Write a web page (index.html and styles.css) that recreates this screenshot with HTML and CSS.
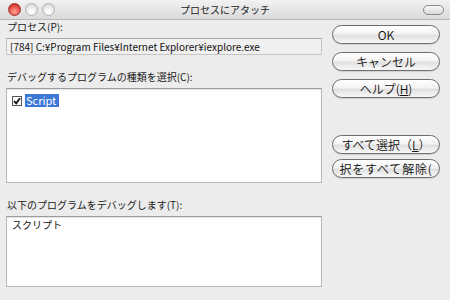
FILE: index.html
```html
<!DOCTYPE html>
<html lang="ja">
<head>
  <meta charset="UTF-8" />
  <title>プロセスにアタッチ</title>
  <link rel="stylesheet" href="styles.css">
</head>
<body>
  <div class="window">
    <div class="titlebar">
      <div class="lights">
        <span class="light red"></span>
        <span class="light"></span>
        <span class="light"></span>
      </div>
      <div class="title">プロセスにアタッチ</div>
      <span class="toolbar-pill"></span>
    </div>

    <div class="content">
      <div class="left">
        <div class="label">プロセス(P):</div>
        <div class="field">[784] C:¥Program Files¥Internet Explorer¥iexplore.exe</div>

        <div class="label gap">デバッグするプログラムの種類を選択(C):</div>
        <div class="box list">
          <div class="row">
            <span class="check">
              <svg width="8" height="8" viewBox="0 0 8 8"><path d="M1 4.2 L3.2 6.4 L7 1.2" fill="none" stroke="#111" stroke-width="1.8"/></svg>
            </span>
            <span class="selected">Script</span>
          </div>
        </div>

        <div class="label gap">以下のプログラムをデバッグします(T):</div>
        <div class="box notes">スクリプト</div>
      </div>

      <div class="right">
        <button class="btn first">OK</button>
        <button class="btn">キャンセル</button>
        <button class="btn">ヘルプ(<u>H</u>)</button>
        <button class="btn group">すべて選択（<u>L</u>）</button>
        <button class="btn tight">択をすべて解除(</button>
      </div>
    </div>
  </div>
</body>
</html>
```

FILE: styles.css
```css
body {
  margin: 0;
  font-family: "Noto Sans CJK JP", "Liberation Sans", sans-serif;
  color: #111;
}

.window {
  width: 450px;
  height: 300px;
  background: #ececec;
  overflow: hidden;
}

.titlebar {
  height: 19px;
  display: flex;
  align-items: center;
  position: relative;
  background: linear-gradient(#f2f2f2, #dadada);
  border-bottom: 1px solid #b8b8b8;
}

.lights {
  display: flex;
  gap: 4px;
  padding-left: 8px;
}

.light {
  width: 13px;
  height: 13px;
  border-radius: 50%;
  box-sizing: border-box;
  border: 1px solid #b0b0b0;
  background: radial-gradient(circle at 50% 70%, #ffffff 10%, #d6d6d6 90%);
}

.light.red {
  border-color: #a0302b;
  background: radial-gradient(circle at 50% 70%, #ff9a90 5%, #d8382e 75%);
}

.title {
  position: absolute;
  left: 0;
  right: 0;
  text-align: center;
  font-size: 10px;
  line-height: 19px;
  color: #222;
}

.toolbar-pill {
  margin-left: auto;
  margin-right: 6px;
  width: 19px;
  height: 8px;
  border-radius: 5px;
  border: 1px solid #8a8a8a;
  background: linear-gradient(#fafafa, #d8d8d8);
}

.content {
  display: flex;
  padding-left: 6px;
}

.left {
  width: 316px;
  display: flex;
  flex-direction: column;
}

.label {
  font-size: 10px;
  line-height: 12px;
  margin-top: 1px;
  padding-left: 1px;
  color: #1a1a1a;
}

.label.gap {
  margin-top: 16px;
}

.field {
  margin-top: 5px;
  height: 17px;
  box-sizing: border-box;
  border: 1px solid #c4c4c4;
  border-top-color: #a8a8a8;
  background: #f0f0f0;
  font-size: 10px;
  line-height: 15px;
  padding-left: 3px;
  white-space: nowrap;
  overflow: hidden;
}

.box {
  margin-top: 5px;
  box-sizing: border-box;
  background: #fff;
  border: 1px solid #b8b8b8;
  border-top-color: #9c9c9c;
  box-shadow: inset 0 1px 1px rgba(0,0,0,0.12);
}

.list {
  height: 95px;
  padding: 5px 0 0 5px;
}

.row {
  display: flex;
  align-items: center;
  gap: 3px;
  height: 13px;
}

.check {
  width: 8px;
  height: 8px;
  border: 1px solid #555;
  background: #fff;
  display: flex;
}

.selected {
  background: #3d78d8;
  color: #fff;
  font-size: 11px;
  line-height: 13px;
  padding: 0 3px 0 1px;
}

.notes {
  height: 71px;
  font-size: 10px;
  line-height: 12px;
  padding: 2px 0 0 5px;
}

.right {
  width: 108px;
  margin-left: 10px;
  display: flex;
  flex-direction: column;
}

.btn {
  height: 19px;
  margin-top: 8px;
  padding: 0;
  border: 1px solid #6e6e6e;
  border-radius: 10px;
  background: linear-gradient(#ffffff 0%, #f4f4f4 45%, #e0e0e0 55%, #f8f8f8 100%);
  box-shadow: 0 1px 1px rgba(0,0,0,0.12);
  font-family: "Noto Sans CJK JP", sans-serif;
  font-size: 12px;
  font-weight: 350;
  color: #111;
  display: flex;
  align-items: center;
  justify-content: center;
  white-space: nowrap;
  overflow: hidden;
}

.btn.first {
  margin-top: 5px;
}

.btn.group {
  margin-top: 37px;
}

.btn.tight {
  margin-top: 5px;
  letter-spacing: 0.8px;
}
```
